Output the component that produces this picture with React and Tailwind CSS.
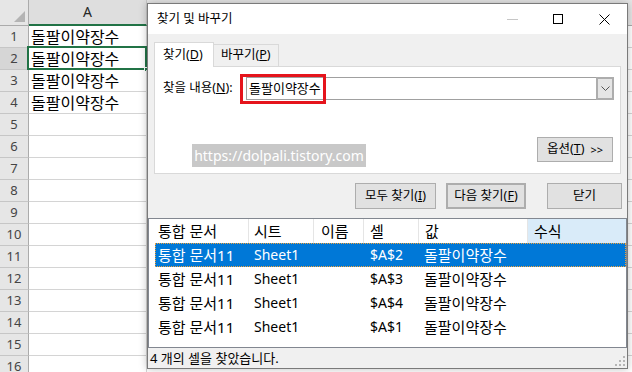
import React from "react";

// ----------------------------------------------------------------------

const rows = Array.from({ length: 16 }, (_, i) => i + 1);
const cellText = { 1: "돌팔이약장수", 2: "돌팔이약장수", 3: "돌팔이약장수", 4: "돌팔이약장수" };

const results = [
  { book: "통합 문서11", sheet: "Sheet1", cell: "$A$2", value: "돌팔이약장수", selected: true },
  { book: "통합 문서11", sheet: "Sheet1", cell: "$A$3", value: "돌팔이약장수" },
  { book: "통합 문서11", sheet: "Sheet1", cell: "$A$4", value: "돌팔이약장수" },
  { book: "통합 문서11", sheet: "Sheet1", cell: "$A$1", value: "돌팔이약장수" },
];

function Sheet() {
  return (
    <div className="flex flex-col">
      <div className="flex h-[26px] bg-white">
        <div className="relative w-[29px] shrink-0 border-r border-b border-[#ababab] bg-[#e6e6e6]">
          <div className="absolute right-[3px] bottom-[3px] h-0 w-0 border-l-[11px] border-t-[11px] border-l-transparent border-t-transparent border-r-0 border-b-[11px] border-b-[#b4b4b4]" />
        </div>
        <div className="flex w-[118px] shrink-0 items-center justify-center border-r border-[#c6c6c6] border-b-2 border-b-[#217346] bg-[#dedede] text-[14px] text-[#262626]">
          A
        </div>
        <div className="flex-1 border-b border-[#ababab] bg-[#e6e6e6]" />
      </div>
      {rows.map((r) => (
        <div key={r} className="flex h-[22px]">
          <div
            className={
              r === 2
                ? "flex w-[29px] shrink-0 items-center justify-center border-r border-b border-r-[#ababab] border-b-[#c6c6c6] bg-[#d6d6d6] text-[13px] text-[#444]"
                : "flex w-[29px] shrink-0 items-center justify-center border-r border-b border-r-[#ababab] border-b-[#c6c6c6] bg-[#e6e6e6] text-[13px] text-[#444]"
            }
          >
            {r}
          </div>
          <div className="relative flex w-[118px] shrink-0 items-center border-r border-b border-[#d4d4d4] pl-[2px] text-[16px] leading-none text-black">
            {cellText[r]}
            {r === 2 && (
              <>
                <div className="absolute -left-[2px] -top-[2px] -right-[1px] -bottom-[1px] border-2 border-[#217346]" />
                <div className="absolute -right-[3px] -bottom-[3px] h-[5px] w-[5px] border border-white bg-[#217346]" />
              </>
            )}
          </div>
          <div className="flex-1 border-b border-[#d4d4d4]" />
        </div>
      ))}
    </div>
  );
}

function TitleBar() {
  return (
    <div className="flex h-[30px] items-center bg-white">
      <div className="flex-1 pl-[9px] text-[12.5px] text-black">찾기 및 바꾸기</div>
      <div className="flex h-full w-[46px] items-center justify-center">
        <div className="h-px w-[11px] bg-[#c6c6c6]" />
      </div>
      <div className="flex h-full w-[46px] items-center justify-center">
        <div className="h-[10px] w-[10px] border border-black" />
      </div>
      <div className="flex h-full w-[46px] items-center justify-center">
        <svg width="11" height="11" viewBox="0 0 11 11">
          <path d="M0.5 0.5 L10.5 10.5 M10.5 0.5 L0.5 10.5" stroke="#000" strokeWidth="1" />
        </svg>
      </div>
    </div>
  );
}

function Btn({ children, className = "" }) {
  return (
    <div
      className={
        "flex items-center justify-center border border-[#adadad] bg-[#e1e1e1] text-[12.5px] text-black " + className
      }
    >
      {children}
    </div>
  );
}

function FindPanel() {
  return (
    <div className="relative mx-[6px] flex h-[108px] flex-col border border-[#d9d9d9] bg-white">
      <div className="mt-[10px] flex h-[23px] items-center pl-[8px]">
        <span className="w-[83px] text-[12.5px] text-black">
          찾을 내용(<span className="underline">N</span>):
        </span>
        <div className="flex h-[23px] w-[368px] items-center border border-[#a0a0a0] bg-white">
          <span className="flex-1 pl-[2px] text-[13px] text-black">돌팔이약장수</span>
          <div className="flex h-[23px] w-[18px] items-center justify-center border-2 border-[#adadad] bg-[#e5e5e5] -mr-px">
            <svg width="9" height="5" viewBox="0 0 9 5">
              <path d="M0.5 0.5 L4.5 4.5 L8.5 0.5" stroke="#555" fill="none" strokeWidth="1" />
            </svg>
          </div>
        </div>
      </div>
      <div className="absolute left-[85px] top-[7px] h-[30px] w-[86px] border-[3px] border-[#e5141c]" />
      <div className="absolute left-[37px] top-[77px] flex h-[23px] w-[174px] items-center justify-center bg-[#c8c8c8] text-[14px] text-white">
        https://dolpali.tistory.com
      </div>
      <div className="mt-[37px] flex justify-end pr-[7px]">
        <Btn className="h-[25px] w-[76px] gap-[6px]">
          <span>
            옵션(<span className="underline">T</span>)
          </span>
          <span className="text-[11px]">&gt;&gt;</span>
        </Btn>
      </div>
    </div>
  );
}

function ResultList() {
  return (
    <div className="flex h-[130px] flex-col border border-[#828790] bg-white text-[15px] text-black">
      <div className="flex h-[24px] shrink-0 items-center">
        <div className="flex h-full w-[100px] items-center border-r border-[#e5e5e5] pl-[9px]">통합 문서</div>
        <div className="flex h-full w-[65px] items-center border-r border-[#e5e5e5] pl-[5px]">시트</div>
        <div className="flex h-full w-[50px] items-center border-r border-[#e5e5e5] pl-[7px]">이름</div>
        <div className="flex h-full w-[55px] items-center border-r border-[#e5e5e5] pl-[6px]">셀</div>
        <div className="flex h-full w-[109px] items-center border-r border-[#e5e5e5] pl-[6px]">값</div>
        <div className="flex h-full flex-1 items-center bg-[#d9ebf9] pl-[6px]">수식</div>
      </div>
      {results.map((r, i) => (
        <div
          key={i}
          className={
            r.selected
              ? "ml-[6px] flex h-[24px] items-center bg-[#0078d7] text-white outline-1 -outline-offset-1 outline-dotted outline-[#f2a33a]"
              : "ml-[6px] flex h-[24px] items-center"
          }
        >
          <div className="w-[93px] pl-[3px]">{r.book}</div>
          <div className="w-[65px] pl-[6px] text-[14px]">{r.sheet}</div>
          <div className="w-[50px]" />
          <div className="w-[55px] pl-[7px] text-[14px]">{r.cell}</div>
          <div className="flex-1 pl-[6px]">{r.value}</div>
        </div>
      ))}
    </div>
  );
}

function FindDialog() {
  return (
    <div className="absolute left-[147px] top-[3px] flex h-[366px] w-[481px] flex-col border border-[#7a7a7a] bg-[#f0f0f0] shadow-[0_0_8px_rgba(0,0,0,0.25)]">
      <TitleBar />
      <div className="mt-[8px] flex h-[24px] items-end pl-[6px]">
        <div className="relative z-10 -mb-px flex h-[25px] w-[60px] items-center border border-b-0 border-[#d9d9d9] bg-white pl-[8px] text-[12.5px] text-black">
          찾기(<span className="underline">D</span>)
        </div>
        <div className="flex h-[22px] w-[65px] items-center border border-l-0 border-b-0 border-[#d9d9d9] bg-[#f0f0f0] pl-[7px] text-[12.5px] text-black">
          바꾸기(<span className="underline">P</span>)
        </div>
      </div>
      <FindPanel />
      <div className="mt-[9px] flex h-[26px] justify-end pr-[5px]">
        <Btn className="h-[26px] w-[81px]">
          모두 찾기(<span className="underline">I</span>)
        </Btn>
        <Btn className="ml-[10px] h-[26px] w-[80px] border-2 border-[#0078d7]">
          다음 찾기(<span className="underline">F</span>)
        </Btn>
        <Btn className="ml-[21px] h-[26px] w-[75px]">닫기</Btn>
      </div>
      <div className="mt-[9px]">
        <ResultList />
      </div>
      <div className="relative flex h-[20px] items-center pl-[2px] text-[13px] text-black">
        4 개의 셀을 찾았습니다.
        <svg className="absolute right-[2px] bottom-[2px]" width="10" height="10" viewBox="0 0 10 10">
          {[
            [8, 0],
            [8, 4],
            [4, 4],
            [8, 8],
            [4, 8],
            [0, 8],
          ].map(([x, y], i) => (
            <rect key={i} x={x} y={y} width="2" height="2" fill="#b5b5b5" />
          ))}
        </svg>
      </div>
    </div>
  );
}

export default function App() {
  return (
    <div className="relative h-[372px] w-[632px] overflow-hidden bg-white font-['Noto_Sans','Noto_Sans_CJK_KR',sans-serif] leading-none">
      <Sheet />
      <FindDialog />
    </div>
  );
}
